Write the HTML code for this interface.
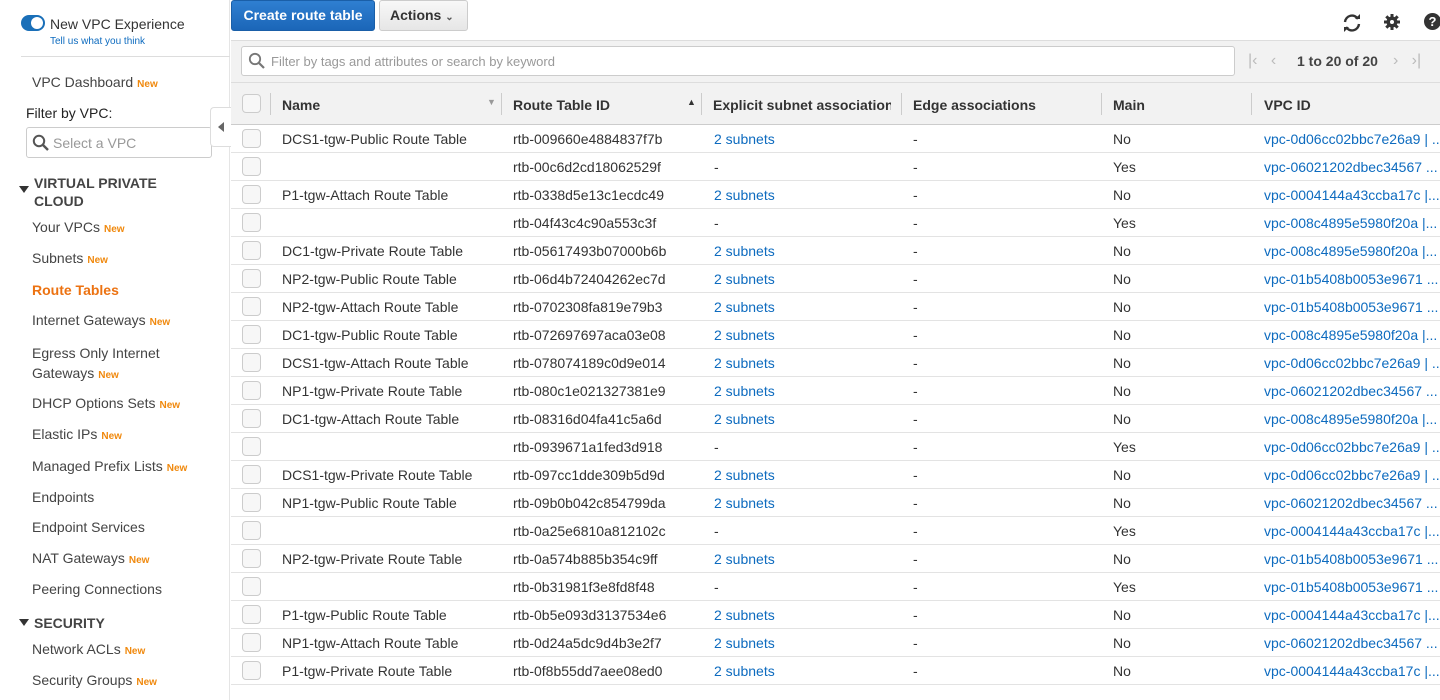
<!DOCTYPE html>
<html><head><style>
*{box-sizing:border-box;margin:0;padding:0}
body{width:1440px;height:700px;overflow:hidden;background:#fff;font-family:"Liberation Sans",Arial,sans-serif;color:#333;position:relative}
.a{position:absolute;white-space:nowrap}
.side{position:absolute;left:0;top:0;width:230px;height:700px;border-right:1px solid #e5e5e5;background:#fff}
.nav{font-size:14px;color:#444;left:32px}
.new{color:#f0890e;font-size:10px;font-weight:bold;margin-left:4px}
.hdr{position:absolute;left:231px;top:82px;width:1209px;height:43px;background:#f2f2f2;border-top:1px solid #ddd;border-bottom:1px solid #ccc}
.th{position:absolute;top:14px;font-size:14px;font-weight:bold;color:#333;white-space:nowrap}
.dv{position:absolute;top:10px;width:1px;height:22px;background:#ccc}
.row{position:absolute;left:231px;width:1209px;height:28px;border-bottom:1px solid #e3e3e3;font-size:14px}
.row span{position:absolute;top:6px;white-space:nowrap}
.cb{position:absolute;left:11px;top:4px;width:19px;height:19px;border:1px solid #ccc;border-radius:4px;background:#f7f7f7}
.l{color:#0d6bbf}
</style></head><body>
<div class="side">
 <div class="a" style="left:21px;top:15px;width:24px;height:16px;border-radius:8px;background:#1a6fb8"><div style="position:absolute;right:2px;top:2px;width:12px;height:12px;border-radius:6px;background:#fff"></div></div>
 <div class="a" style="left:50px;top:16px;font-size:14px;color:#333">New VPC Experience</div>
 <div class="a" style="left:50px;top:36px;font-size:10px;color:#0d6bbf">Tell us what you think</div>
 <div class="a" style="left:21px;top:56px;width:209px;height:1px;background:#ddd"></div>
 <div class="a nav" style="top:74px">VPC Dashboard<span class="new">New</span></div>
 <div class="a" style="left:26px;top:105px;font-size:14px;color:#222">Filter by VPC:</div>
 <div class="a" style="left:26px;top:127px;width:186px;height:31px;border:1px solid #ccc;border-radius:3px"></div>
 <svg class="a" style="left:32px;top:134px" width="17" height="17" viewBox="0 0 17 17"><circle cx="7" cy="7" r="5.2" fill="none" stroke="#555" stroke-width="2"/><path d="M11 11l5 5" stroke="#555" stroke-width="2.4"/></svg>
 <div class="a" style="left:53px;top:135px;font-size:14px;color:#999">Select a VPC</div>
 <div class="a" style="left:210px;top:107px;width:21px;height:40px;background:#fff;border:1px solid #ddd;border-right:none;border-radius:4px 0 0 4px"></div>
 <div class="a" style="left:218px;top:122px;width:0;height:0;border-top:5px solid transparent;border-bottom:5px solid transparent;border-right:6px solid #666"></div>
 <div class="a" style="left:19px;top:186px;border-left:5px solid transparent;border-right:5px solid transparent;border-top:7px solid #333"></div>
 <div class="a" style="left:34px;top:174px;font-size:14px;font-weight:bold;color:#444;line-height:18px">VIRTUAL PRIVATE<br>CLOUD</div>
 <div class="a nav" style="top:219px">Your VPCs<span class="new">New</span></div>
 <div class="a nav" style="top:250px">Subnets<span class="new">New</span></div>
 <div class="a nav" style="top:282px;color:#ec7211;font-weight:bold">Route Tables</div>
 <div class="a nav" style="top:312px">Internet Gateways<span class="new">New</span></div>
 <div class="a nav" style="top:343px;line-height:20px">Egress Only Internet<br>Gateways<span class="new">New</span></div>
 <div class="a nav" style="top:395px">DHCP Options Sets<span class="new">New</span></div>
 <div class="a nav" style="top:426px">Elastic IPs<span class="new">New</span></div>
 <div class="a nav" style="top:458px">Managed Prefix Lists<span class="new">New</span></div>
 <div class="a nav" style="top:489px">Endpoints</div>
 <div class="a nav" style="top:519px">Endpoint Services</div>
 <div class="a nav" style="top:550px">NAT Gateways<span class="new">New</span></div>
 <div class="a nav" style="top:581px">Peering Connections</div>
 <div class="a" style="left:19px;top:619px;border-left:5px solid transparent;border-right:5px solid transparent;border-top:7px solid #333"></div>
 <div class="a" style="left:34px;top:615px;font-size:14px;font-weight:bold;color:#444">SECURITY</div>
 <div class="a nav" style="top:641px">Network ACLs<span class="new">New</span></div>
 <div class="a nav" style="top:672px">Security Groups<span class="new">New</span></div>
</div>
<div class="a" style="left:231px;top:0;width:144px;height:31px;background:linear-gradient(#2f7fd1,#1b66b8);border:1px solid #1a5fa8;border-radius:3px;color:#fff;font-weight:bold;font-size:14px;text-align:center;line-height:29px">Create route table</div>
<div class="a" style="left:379px;top:0;width:89px;height:31px;background:linear-gradient(#f8f8f8,#e6e6e6);border:1px solid #ccc;border-radius:3px;color:#333;font-weight:bold;font-size:14px;line-height:29px;padding-left:10px">Actions <span style="font-size:10px;color:#555">&#8964;</span></div>
<svg class="a" style="left:1341px;top:13px" width="22" height="20" viewBox="0 0 22 20"><path d="M4 9a7 7 0 0 1 13-3" fill="none" stroke="#333" stroke-width="2.4"/><path d="M18 11a7 7 0 0 1-13 3" fill="none" stroke="#333" stroke-width="2.4"/><path d="M14 6h5V1z" fill="#333"/><path d="M8 14H3v5z" fill="#333"/></svg>
<svg class="a" style="left:1384px;top:14px" width="16" height="16" viewBox="0 0 16 16"><circle cx="8" cy="8" r="5.5" fill="#333"/><g stroke="#333" stroke-width="3"><path d="M8 0v16M0 8h16M2.3 2.3l11.4 11.4M13.7 2.3L2.3 13.7"/></g><circle cx="8" cy="8" r="2" fill="#fff"/></svg>
<div class="a" style="left:1424px;top:13px;width:17px;height:17px;border-radius:50%;background:#333;color:#fff;font-weight:bold;font-size:13px;text-align:center;line-height:17px">?</div>
<div class="a" style="left:231px;top:40px;width:1209px;height:42px;background:#f2f2f2;border-top:1px solid #ddd"></div>
<div class="a" style="left:241px;top:46px;width:994px;height:30px;background:#fff;border:1px solid #ccc;border-radius:3px"></div>
<svg class="a" style="left:248px;top:52px" width="17" height="17" viewBox="0 0 17 17"><circle cx="7" cy="7" r="5.2" fill="none" stroke="#777" stroke-width="1.8"/><path d="M11 11l5 5" stroke="#777" stroke-width="2.2"/></svg>
<div class="a" style="left:271px;top:54px;font-size:13px;color:#999">Filter by tags and attributes or search by keyword</div>
<div class="a" style="left:1248px;top:52px;font-size:16px;color:#bbb">|&lsaquo;&nbsp;&nbsp;&nbsp;&lsaquo;</div>
<div class="a" style="left:1297px;top:53px;font-size:14px;font-weight:bold;color:#444">1 to 20 of 20</div>
<div class="a" style="left:1393px;top:52px;font-size:16px;color:#bbb">&rsaquo;&nbsp;&nbsp;&nbsp;&rsaquo;|</div>
<div class="hdr">
 <div class="cb" style="top:11px"></div>
 <div class="dv" style="left:39px"></div>
 <div class="th" style="left:51px">Name</div><div class="a" style="left:256px;top:14px;font-size:9px;color:#999">&#9660;</div>
 <div class="dv" style="left:270px"></div>
 <div class="th" style="left:282px">Route Table ID</div><div class="a" style="left:456px;top:14px;font-size:9px;color:#333">&#9650;</div>
 <div class="dv" style="left:470px"></div>
 <div class="th" style="left:482px;width:178px;overflow:hidden">Explicit subnet association</div>
 <div class="dv" style="left:670px"></div>
 <div class="th" style="left:682px">Edge associations</div>
 <div class="dv" style="left:870px"></div>
 <div class="th" style="left:882px">Main</div>
 <div class="dv" style="left:1020px"></div>
 <div class="th" style="left:1033px">VPC ID</div>
</div>
<div id="rows"></div>
<script>
var d=[["DCS1-tgw-Public Route Table","rtb-009660e4884837f7b",1,"No","vpc-0d06cc02bbc7e26a9 | ..."],
["","rtb-00c6d2cd18062529f",0,"Yes","vpc-06021202dbec34567 ..."],
["P1-tgw-Attach Route Table","rtb-0338d5e13c1ecdc49",1,"No","vpc-0004144a43ccba17c |..."],
["","rtb-04f43c4c90a553c3f",0,"Yes","vpc-008c4895e5980f20a |..."],
["DC1-tgw-Private Route Table","rtb-05617493b07000b6b",1,"No","vpc-008c4895e5980f20a |..."],
["NP2-tgw-Public Route Table","rtb-06d4b72404262ec7d",1,"No","vpc-01b5408b0053e9671 ..."],
["NP2-tgw-Attach Route Table","rtb-0702308fa819e79b3",1,"No","vpc-01b5408b0053e9671 ..."],
["DC1-tgw-Public Route Table","rtb-072697697aca03e08",1,"No","vpc-008c4895e5980f20a |..."],
["DCS1-tgw-Attach Route Table","rtb-078074189c0d9e014",1,"No","vpc-0d06cc02bbc7e26a9 | ..."],
["NP1-tgw-Private Route Table","rtb-080c1e021327381e9",1,"No","vpc-06021202dbec34567 ..."],
["DC1-tgw-Attach Route Table","rtb-08316d04fa41c5a6d",1,"No","vpc-008c4895e5980f20a |..."],
["","rtb-0939671a1fed3d918",0,"Yes","vpc-0d06cc02bbc7e26a9 | ..."],
["DCS1-tgw-Private Route Table","rtb-097cc1dde309b5d9d",1,"No","vpc-0d06cc02bbc7e26a9 | ..."],
["NP1-tgw-Public Route Table","rtb-09b0b042c854799da",1,"No","vpc-06021202dbec34567 ..."],
["","rtb-0a25e6810a812102c",0,"Yes","vpc-0004144a43ccba17c |..."],
["NP2-tgw-Private Route Table","rtb-0a574b885b354c9ff",1,"No","vpc-01b5408b0053e9671 ..."],
["","rtb-0b31981f3e8fd8f48",0,"Yes","vpc-01b5408b0053e9671 ..."],
["P1-tgw-Public Route Table","rtb-0b5e093d3137534e6",1,"No","vpc-0004144a43ccba17c |..."],
["NP1-tgw-Attach Route Table","rtb-0d24a5dc9d4b3e2f7",1,"No","vpc-06021202dbec34567 ..."],
["P1-tgw-Private Route Table","rtb-0f8b55dd7aee08ed0",1,"No","vpc-0004144a43ccba17c |..."]];
var h="";d.forEach(function(r,i){h+='<div class="row" style="top:'+(125+i*28)+'px"><div class="cb"></div><span style="left:51px">'+r[0]+'</span><span style="left:282px">'+r[1]+'</span><span style="left:483px" class="'+(r[2]?'l':'')+'">'+(r[2]?'2 subnets':'-')+'</span><span style="left:682px">-</span><span style="left:882px">'+r[3]+'</span><span style="left:1033px" class="l">'+r[4]+'</span></div>'});
document.getElementById("rows").innerHTML=h;
</script>
</body></html>
